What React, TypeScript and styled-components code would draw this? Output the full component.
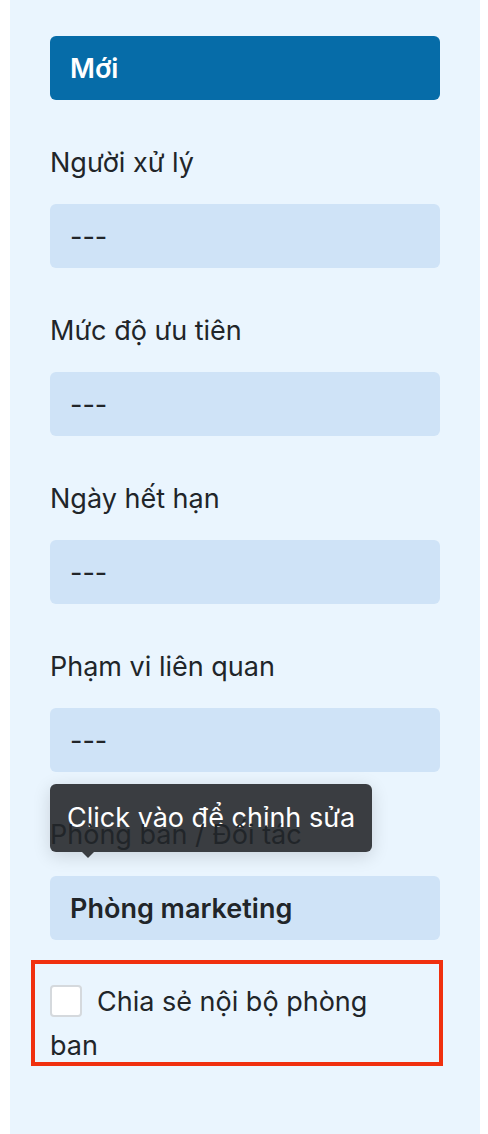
import React from "react";
import styled, { createGlobalStyle } from "styled-components";

const GlobalStyle = createGlobalStyle`
  html, body {
    margin: 0;
    padding: 0;
    background: #ffffff;
  }
  body {
    font-family: Inter, "Noto Sans", "Liberation Sans", sans-serif;
    color: #212529;
  }
  * { box-sizing: border-box; }
`;

const Panel = styled.div`
  margin-left: 10px;
  width: 470px;
  min-height: 1134px;
  background: #eaf5fe;
  padding: 36px 40px 40px;
`;

const StatusBar = styled.div`
  height: 64px;
  border-radius: 6px;
  background: #066ca8;
  color: #ffffff;
  font-size: 27px;
  font-weight: 600;
  padding: 0 20px;
  display: flex;
  align-items: center;
`;

const Field = styled.div`
  position: relative;
  margin-top: 43px;
`;

const Label = styled.div`
  position: relative;
  z-index: 2;
  font-size: 27px;
  line-height: 39px;
  color: #212529;
  margin-bottom: 22px;
`;

const Value = styled.div<{ $strong?: boolean }>`
  height: 64px;
  border-radius: 6px;
  background: #cfe3f7;
  padding: 0 20px;
  display: flex;
  align-items: center;
  font-size: 27px;
  font-weight: ${(p) => (p.$strong ? 600 : 400)};
  color: #212529;
`;

const Tooltip = styled.div`
  position: absolute;
  top: -31px;
  left: 0;
  height: 68px;
  line-height: 68px;
  padding: 0 17px;
  background: #3a3d41;
  color: #ffffff;
  font-size: 27px;
  border-radius: 6px;
  white-space: nowrap;
  box-shadow: 0 4px 18px rgba(0, 0, 0, 0.14);
  z-index: 1;

  &::after {
    content: "";
    position: absolute;
    left: 32px;
    bottom: -6px;
    border-left: 6px solid transparent;
    border-right: 6px solid transparent;
    border-top: 6px solid #3a3d41;
  }
`;

const CheckRow = styled.div`
  position: relative;
  margin-top: 40px;
`;

const CheckLabel = styled.label`
  display: block;
  max-width: 345px;
  font-size: 27px;
  line-height: 44px;
  color: #212529;
`;

const Box = styled.span`
  display: inline-block;
  width: 32px;
  height: 32px;
  margin-right: 15px;
  vertical-align: -6px;
  background: #ffffff;
  border: 2px solid #d5d9dd;
  border-radius: 4px;
`;

const Highlight = styled.div`
  position: absolute;
  top: -20px;
  left: -19px;
  right: -3px;
  bottom: 2px;
  border: 4px solid #f0300f;
  pointer-events: none;
`;

const fields = [
  { label: "Người xử lý", value: "---" },
  { label: "Mức độ ưu tiên", value: "---" },
  { label: "Ngày hết hạn", value: "---" },
  { label: "Phạm vi liên quan", value: "---" },
];

export default function App() {
  return (
    <>
      <GlobalStyle />
      <Panel>
        <StatusBar>Mới</StatusBar>
        {fields.map((f) => (
          <Field key={f.label}>
            <Label>{f.label}</Label>
            <Value>{f.value}</Value>
          </Field>
        ))}
        <Field>
          <Tooltip>Click vào để chỉnh sửa</Tooltip>
          <Label>Phòng ban / Đối tác</Label>
          <Value $strong>Phòng marketing</Value>
        </Field>
        <CheckRow>
          <CheckLabel>
            <Box />
            Chia sẻ nội bộ phòng ban
          </CheckLabel>
          <Highlight />
        </CheckRow>
      </Panel>
    </>
  );
}
